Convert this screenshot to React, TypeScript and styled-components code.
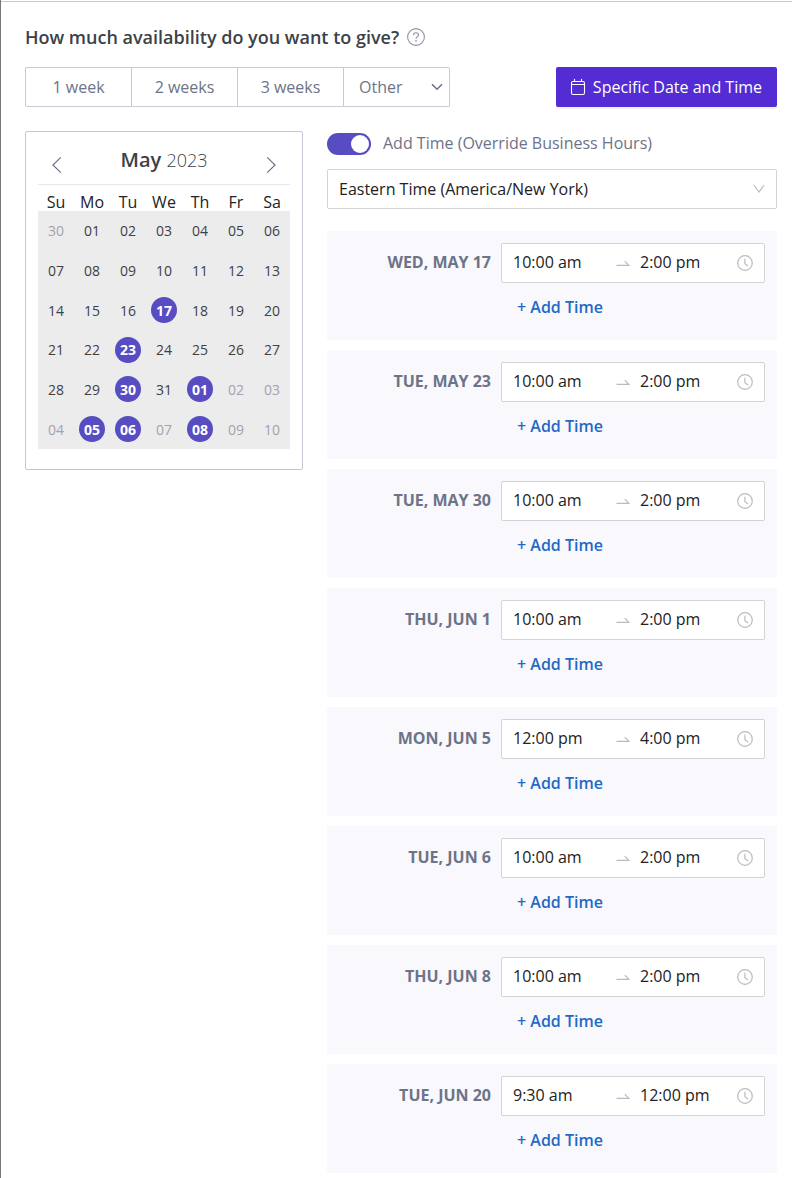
import React, { useState } from "react";
import styled, { createGlobalStyle } from "styled-components";

const GlobalStyle = createGlobalStyle`
  *, *::before, *::after { box-sizing: border-box; }
  body { margin: 0; background: #fff; }
  body, button, input, select {
    font-family: "Open Sans", "Noto Sans", sans-serif;
    font-size: 16px;
    line-height: 24px;
  }
  button { cursor: pointer; }
`;

const Page = styled.div`
  min-height: 100vh;
  padding-top: 1px;
  border-left: 1px solid #75777d;
`;

const Panel = styled.main`
  padding: 23px 15px 4px 24px;
  border-top: 1px solid #c8c9ce;
`;

const Heading = styled.div`
  display: flex;
  align-items: center;
  gap: 8px;
  margin-bottom: 18px;
`;

const Title = styled.h1`
  margin: 0;
  color: #3c4148;
  font-size: 18px;
  font-weight: 600;
  line-height: 24px;
`;

const HelpButton = styled.button`
  display: flex;
  padding: 0;
  border: 0;
  background: none;
  color: #8f93a3;
`;

const Toolbar = styled.div`
  display: flex;
  justify-content: space-between;
  gap: 16px;
  margin-bottom: 24px;
`;

const Segments = styled.div`
  display: grid;
  grid-template-columns: repeat(4, 106px);
  height: 40px;
  border: 1px solid #c9c9d3;
  border-left: 0;
  border-radius: 2px;
`;

const Segment = styled.button`
  padding: 0;
  border: 0;
  border-left: 1px solid #c9c9d3;
  background: none;
  color: #6d7388;
`;

const OtherBox = styled.div`
  display: grid;
  align-items: center;
  border-left: 1px solid #c9c9d3;
  color: #6d7388;

  & > * { grid-area: 1 / 1; }
  & > svg { justify-self: end; margin-right: 6px; pointer-events: none; }
`;

const OtherSelect = styled.select`
  width: 100%;
  height: 100%;
  padding: 0 24px 0 15px;
  border: 0;
  appearance: none;
  background: none;
  color: inherit;
`;

const PrimaryButton = styled.button`
  display: flex;
  align-items: center;
  gap: 7px;
  height: 40px;
  padding: 0 15px 0 14px;
  border: 0;
  border-radius: 2px;
  background: #532cd3;
  box-shadow: 0 2px 0 rgba(0, 0, 0, 0.05);
  color: #fff;
  white-space: nowrap;
`;

const Columns = styled.div`
  display: flex;
  align-items: flex-start;
  gap: 24px;
`;

const Calendar = styled.section`
  flex: none;
  width: 278px;
  padding: 8px 12px 20px;
  border: 1px solid #c6c6d6;
  border-radius: 2px;
`;

const MonthBar = styled.header`
  display: flex;
  justify-content: space-between;
  height: 45px;
  padding: 8px 11px 0;
  border-bottom: 1px solid #e8e8ea;
`;

const MonthName = styled.h2`
  margin: 0;
  color: #3c4148;
  font-size: 20px;
  font-weight: 600;
  line-height: 24px;
`;

const Year = styled.span`
  font-size: 18px;
  font-weight: 300;
`;

const ArrowButton = styled.button`
  display: flex;
  align-items: center;
  height: 33px;
  padding: 0;
  border: 0;
  background: none;
  color: #6d7388;
`;

const Days = styled.table`
  display: block;
`;

const WeekdayHead = styled.thead`
  display: block;
  height: 26px;
  padding-top: 7px;
`;

const WeekdayCell = styled.th`
  padding: 0;
  color: #222;
  font-weight: 400;
  line-height: 20px;
  text-align: center;
`;

const WeeksBody = styled.tbody`
  display: grid;
  grid-template-rows: repeat(6, 1fr);
  height: 238px;
  background: #ececec;
`;

const WeekRow = styled.tr`
  display: grid;
  grid-template-columns: repeat(7, 1fr);
  align-items: center;
`;

const DayCell = styled.td`
  display: flex;
  justify-content: center;
  padding: 0;
`;

const Day = styled.button<{ $selected: boolean; $outside: boolean }>`
  width: 26px;
  height: 26px;
  padding: 1px 0 0;
  border: 0;
  border-radius: 50%;
  background: ${(p) => (p.$selected ? "#574cc2" : "transparent")};
  color: ${(p) => (p.$selected ? "#fff" : p.$outside ? "#a0a3b1" : "#3c4148")};
  font-size: 14px;
  font-weight: ${(p) => (p.$selected ? 700 : 400)};
`;

const Schedule = styled.section`
  flex: 1;
  min-width: 0;
`;

const ToggleLabel = styled.label`
  display: flex;
  align-items: center;
  gap: 12px;
  margin-bottom: 14px;
  color: #6d7388;
`;

const Toggle = styled.input`
  display: flex;
  width: 44px;
  height: 22px;
  margin: 2px 0 0;
  padding: 2px;
  border-radius: 11px;
  appearance: none;
  background: #bfbfc8;

  &::before {
    content: "";
    width: 18px;
    height: 18px;
    border-radius: 50%;
    background: #fff;
  }
  &:checked { justify-content: flex-end; background: #574cc2; }
`;

const ZoneBox = styled.div`
  display: grid;
  align-items: center;
  height: 40px;
  margin-bottom: 22px;
  border: 1px solid #d3d3d3;
  border-radius: 2px;
  color: #bbb;

  & > * { grid-area: 1 / 1; }
  & > svg { justify-self: end; margin-right: 11px; pointer-events: none; }
`;

const ZoneSelect = styled.select`
  width: 100%;
  height: 100%;
  padding: 0 32px 0 11px;
  border: 0;
  appearance: none;
  background: none;
  color: #222;
`;

const SlotList = styled.ul`
  display: grid;
  gap: 10px;
  margin: 0;
  padding: 0;
  list-style: none;
`;

const Slot = styled.li`
  display: grid;
  grid-template-columns: 1fr 264px;
  column-gap: 10px;
  row-gap: 12px;
  padding: 12px 12px 21px;
  background: #f9f8fd;
`;

const SlotDate = styled.h3`
  margin: 0;
  color: #6d7388;
  font-size: 16px;
  font-weight: 700;
  line-height: 38px;
  text-align: right;
  white-space: nowrap;
`;

const RangeField = styled.div`
  display: flex;
  align-items: center;
  height: 40px;
  padding: 0 11px;
  border: 1px solid #d3d3d3;
  border-radius: 2px;
  background: #fff;
  color: #bbb;
`;

const TimeInput = styled.input`
  flex: 1;
  width: 0;
  min-width: 0;
  height: 36px;
  padding: 0 0 2px;
  border: 0;
  outline: 0;
  background: none;
  color: #222;
`;

const RangeArrow = styled.span`
  display: flex;
  padding: 0 10px 0 6px;
`;

const AddButton = styled.button`
  grid-column: 2;
  justify-self: start;
  padding: 0 16px;
  border: 0;
  background: none;
  color: #1f6ac4;
  font-weight: 600;
`;

const HelpIcon = () => (
  <svg width="18" height="18" viewBox="0 0 18 18" fill="none" stroke="currentColor" aria-hidden="true">
    <circle cx="9" cy="9" r="8.4" strokeWidth="1.1" />
    <path d="M6.5 7.2C6.5 5.6 7.6 4.7 9 4.7s2.5.9 2.5 2.2c0 1.1-.8 1.6-1.5 2.1-.7.4-1 .8-1 1.7" strokeWidth="1.1" />
    <circle cx="9" cy="12.9" r=".8" fill="currentColor" stroke="none" />
  </svg>
);

const CalendarIcon = () => (
  <svg width="16" height="18" viewBox="0 0 16 18" fill="none" stroke="currentColor" strokeWidth="1.1" aria-hidden="true">
    <rect x="1.5" y="3.5" width="13" height="13" rx="1.6" />
    <path d="M1.5 6.5h13M4.5 1v2.5M11.5 1v2.5" />
  </svg>
);

const SmallChevron = () => (
  <svg width="12" height="8" viewBox="0 0 12 8" fill="none" stroke="currentColor" strokeWidth="1.6" aria-hidden="true">
    <path d="M1 1.2l5 5 5-5" />
  </svg>
);

const ZoneChevron = () => (
  <svg width="12" height="10" viewBox="0 0 12 10" fill="none" stroke="currentColor" strokeWidth="1.2" aria-hidden="true">
    <path d="M.8 1L6 8l5.200-7" />
  </svg>
);

const MonthArrow = ({ next = false }: { next?: boolean }) => (
  <svg width="16" height="16" viewBox="0 0 16 16" fill="none" stroke="currentColor" strokeWidth="1.2" aria-hidden="true">
    <path d={next ? "M4.200.4L12 8l-7.800 7.600" : "M11.800.4L4 8l7.800 7.600"} />
  </svg>
);

const SwapArrow = () => (
  <svg width="14" height="8" viewBox="0 0 14 8" fill="none" stroke="currentColor" strokeWidth="1.2" aria-hidden="true">
    <path d="M.5 6.400h12.300L8.800 2.200" />
  </svg>
);

const ClockIcon = () => (
  <svg width="16" height="16" viewBox="0 0 16 16" fill="none" stroke="currentColor" strokeWidth="1.2" aria-hidden="true">
    <circle cx="8" cy="8" r="7.300" />
    <path d="M7.900 3.800v5l3.200 2.200" />
  </svg>
);

const weekdays = ["Su", "Mo", "Tu", "We", "Th", "Fr", "Sa"];

const weeks = [
  ["30", "01", "02", "03", "04", "05", "06"],
  ["07", "08", "09", "10", "11", "12", "13"],
  ["14", "15", "16", "17", "18", "19", "20"],
  ["21", "22", "23", "24", "25", "26", "27"],
  ["28", "29", "30", "31", "01", "02", "03"],
  ["04", "05", "06", "07", "08", "09", "10"],
];

/* Positions in the six-week grid: the month covers 1 to 31. */
const selectedPositions = new Set([17, 23, 30, 32, 36, 37, 39]);

const slots = [
  { date: "WED, MAY 17", from: "10:00 am", to: "2:00 pm" },
  { date: "TUE, MAY 23", from: "10:00 am", to: "2:00 pm" },
  { date: "TUE, MAY 30", from: "10:00 am", to: "2:00 pm" },
  { date: "THU, JUN 1", from: "10:00 am", to: "2:00 pm" },
  { date: "MON, JUN 5", from: "12:00 pm", to: "4:00 pm" },
  { date: "TUE, JUN 6", from: "10:00 am", to: "2:00 pm" },
  { date: "THU, JUN 8", from: "10:00 am", to: "2:00 pm" },
  { date: "TUE, JUN 20", from: "9:30 am", to: "12:00 pm" },
];

export default function App() {
  const [override, setOverride] = useState(true);

  return (
    <>
      <GlobalStyle />
      <Page>
        <Panel>
          <Heading>
            <Title>How much availability do you want to give?</Title>
            <HelpButton type="button" aria-label="Help">
              <HelpIcon />
            </HelpButton>
          </Heading>

          <Toolbar>
            <Segments>
              <Segment type="button">1 week</Segment>
              <Segment type="button">2 weeks</Segment>
              <Segment type="button">3 weeks</Segment>
              <OtherBox>
                <OtherSelect aria-label="Other length">
                  <option>Other</option>
                </OtherSelect>
                <SmallChevron />
              </OtherBox>
            </Segments>
            <PrimaryButton type="button">
              <CalendarIcon />
              Specific Date and Time
            </PrimaryButton>
          </Toolbar>

          <Columns>
            <Calendar>
              <MonthBar>
                <ArrowButton type="button" aria-label="Previous month">
                  <MonthArrow />
                </ArrowButton>
                <MonthName>
                  May <Year>2023</Year>
                </MonthName>
                <ArrowButton type="button" aria-label="Next month">
                  <MonthArrow next />
                </ArrowButton>
              </MonthBar>
              <Days>
                <WeekdayHead>
                  <WeekRow>
                    {weekdays.map((name) => (
                      <WeekdayCell key={name} scope="col">
                        {name}
                      </WeekdayCell>
                    ))}
                  </WeekRow>
                </WeekdayHead>
                <WeeksBody>
                  {weeks.map((week, row) => (
                    <WeekRow key={row}>
                      {week.map((day, column) => {
                        const position = row * 7 + column;
                        return (
                          <DayCell key={column}>
                            <Day
                              type="button"
                              $selected={selectedPositions.has(position)}
                              $outside={position < 1 || position > 31}
                              aria-pressed={selectedPositions.has(position)}
                            >
                              {day}
                            </Day>
                          </DayCell>
                        );
                      })}
                    </WeekRow>
                  ))}
                </WeeksBody>
              </Days>
            </Calendar>

            <Schedule>
              <ToggleLabel>
                <Toggle
                  type="checkbox"
                  role="switch"
                  checked={override}
                  onChange={(event) => setOverride(event.target.checked)}
                />
                Add Time (Override Business Hours)
              </ToggleLabel>
              <ZoneBox>
                <ZoneSelect aria-label="Time zone">
                  <option>Eastern Time (America/New York)</option>
                </ZoneSelect>
                <ZoneChevron />
              </ZoneBox>
              <SlotList>
                {slots.map((slot) => (
                  <Slot key={slot.date}>
                    <SlotDate>{slot.date}</SlotDate>
                    <RangeField>
                      <TimeInput aria-label={`${slot.date} start`} defaultValue={slot.from} />
                      <RangeArrow>
                        <SwapArrow />
                      </RangeArrow>
                      <TimeInput aria-label={`${slot.date} end`} defaultValue={slot.to} />
                      <ClockIcon />
                    </RangeField>
                    <AddButton type="button">+ Add Time</AddButton>
                  </Slot>
                ))}
              </SlotList>
            </Schedule>
          </Columns>
        </Panel>
      </Page>
    </>
  );
}
